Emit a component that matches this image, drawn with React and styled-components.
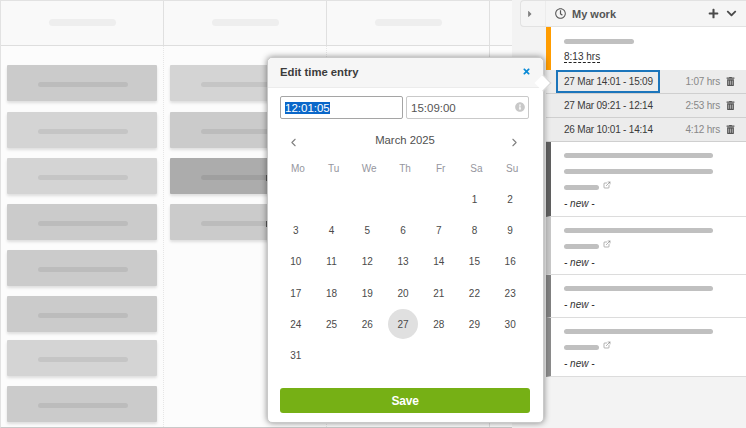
import { useEffect, useRef } from "react";
import styled, { createGlobalStyle } from "styled-components";
import { FaRegClock, FaPlus, FaChevronDown, FaTimes, FaInfoCircle, FaTrashAlt, FaCaretRight } from "react-icons/fa";
import { ChevronLeft, ChevronRight, ExternalLink } from "lucide-react";

const GlobalStyle = createGlobalStyle`
    html, body {
        margin: 0;
        padding: 0;
        background: #fff;
        font-family: "Liberation Sans", Arial, sans-serif;
    }
    * {
        box-sizing: border-box;
    }
    ::selection {
        background: #0a67c9;
        color: #fff;
    }
`;

const Page = styled.div`
    position: relative;
    width: 746px;
    height: 428px;
    display: flex;
    overflow: hidden;
`;

/* board on the left */
const Board = styled.div`
    width: 512px;
    height: 428px;
    display: flex;
    flex-direction: column;
    background: #fcfcfc;
    border: 1px solid #e2e2e2;
    border-right: none;
    border-bottom-color: #c9c9c9;
`;

const BoardHead = styled.div`
    height: 45px;
    flex-shrink: 0;
    display: grid;
    grid-template-columns: 163px 163px 163px 22px;
    background: #f9f9f9;
    border-bottom: 1px solid #dedede;
`;

const HeadCell = styled.div`
    display: flex;
    align-items: center;
    justify-content: center;
    border-right: 1px solid #e0e0e0;

    &:last-child {
        border-right: none;
    }
`;

const HeadBar = styled.span`
    width: 67px;
    height: 7px;
    margin-top: -1px;
    border-radius: 4px;
    background: #eeeeee;
`;

const BoardBody = styled.div`
    flex: 1;
    display: grid;
    grid-template-columns: 163px 163px 163px 22px;
`;

const Lane = styled.div`
    display: flex;
    flex-direction: column;
    padding: 19px 0 0 6px;
    border-right: 1px ${(p) => (p.$solid ? "solid #e0e0e0" : "dotted #e6e6e6")};

    &:last-child {
        border-right: none;
    }
`;

const Card = styled.div`
    position: relative;
    width: 150px;
    height: 36px;
    flex-shrink: 0;
    margin-bottom: ${(p) => p.$gap}px;
    display: flex;
    align-items: center;
    justify-content: center;
    padding: 2px 0 0 2px;
    background: ${(p) => p.$tone};
    border-radius: 1px;
    box-shadow: 0 2px 3px rgba(0, 0, 0, 0.12);
`;

const CardBar = styled.span`
    width: 90px;
    height: 5px;
    border-radius: 3px;
    background: rgba(0, 0, 0, 0.07);
`;

const CardBadge = styled.span`
    position: absolute;
    top: 17px;
    left: 96px;
    width: 6px;
    height: 6px;
    background: #555;
`;

/* my work panel */
const Panel = styled.div`
    flex: 1;
    display: flex;
    flex-direction: column;
    padding-left: 8px;
    background: #f3f3f3;
`;

const PanelHead = styled.div`
    height: 27px;
    flex-shrink: 0;
    display: flex;
    align-items: center;
    background: #f5f5f5;
    border: 1px solid #e2e2e2;
    border-right: none;
    border-radius: 4px 0 0 4px;
    color: #555;
`;

const Toggle = styled.div`
    width: 25px;
    height: 100%;
    display: flex;
    align-items: center;
    padding-left: 4px;
    border-right: 1px solid #ececec;
    color: #808080;
    font-size: 10px;
`;

const PanelTitle = styled.div`
    flex: 1;
    display: flex;
    align-items: center;
    gap: 6px;
    padding-left: 9px;
    font-size: 11px;
    font-weight: bold;
    color: #555;
`;

const HeadActions = styled.div`
    display: flex;
    align-items: center;
    gap: 7px;
    padding-right: 9px;
    font-size: 11px;
    color: #4a4a4a;
`;

const WorkList = styled.div`
    margin-left: 26px;
    display: flex;
    flex-direction: column;
`;

const Summary = styled.div`
    height: 43px;
    padding: 6px 0 0 13px;
    background: #fff;
    border-left: 5px solid #ff9c00;
`;

const Line = styled.div`
    height: 16px;
    display: flex;
    align-items: center;
    gap: 4px;
`;

const Bar = styled.span`
    width: ${(p) => p.$w}px;
    height: 5px;
    border-radius: 3px;
    background: #c0c0c0;
`;

const Total = styled.span`
    font-size: 10px;
    line-height: 11px;
    color: #333;
    border-bottom: 1px dashed #222;
`;

const TimeRow = styled.div`
    height: 24px;
    display: flex;
    align-items: stretch;
    background: #ececec;
    border-bottom: 1px solid #cfcfcf;
    font-size: 10px;
    letter-spacing: -0.2px;
`;

const TimeRange = styled.div`
    width: 104px;
    margin-left: 10px;
    display: flex;
    align-items: center;
    padding-left: 6px;
    color: #3a3a3a;
    white-space: nowrap;
    border: 2px solid ${(p) => (p.$active ? "#1b75bb" : "transparent")};
`;

const Hours = styled.div`
    flex: 1;
    display: flex;
    align-items: center;
    justify-content: flex-end;
    color: #888;
`;

const TrashBtn = styled.div`
    width: 26px;
    display: flex;
    align-items: center;
    padding-left: 6px;
    color: #555;
    font-size: 9px;
`;

const WorkItem = styled.div`
    padding: 5px 0 ${(p) => p.$bottom}px 13px;
    background: #fff;
    border-left: 5px solid ${(p) => p.$strip};
    border-bottom: 1px solid #dcdcdc;
`;

const LinkIcon = styled.span`
    display: flex;
    margin-top: -4px;
    color: #666;
`;

const NewLabel = styled.div`
    height: 16px;
    display: flex;
    align-items: center;
    font-size: 10px;
    font-style: italic;
    color: #333;
`;

/* time entry popover, it lies over the board */
const Popover = styled.div`
    position: absolute;
    top: 57px;
    left: 267px;
    width: 277px;
    background: #fff;
    border: 1px solid #c9c9c9;
    border-radius: 5px;
    box-shadow: 0 0 6px rgba(0, 0, 0, 0.45);
`;

const Arrow = styled.span`
    position: absolute;
    top: 19px;
    right: -6px;
    width: 12px;
    height: 12px;
    background: #fff;
    border-top: 1px solid #d4d4d4;
    border-right: 1px solid #d4d4d4;
    transform: rotate(45deg);
`;

const PopHead = styled.div`
    height: 30px;
    display: flex;
    align-items: center;
    justify-content: space-between;
    padding: 0 12px 2px 12px;
    background: #f6f6f6;
    border-bottom: 1px solid #ececec;
    border-radius: 5px 5px 0 0;
    font-size: 11.3px;
    font-weight: bold;
    color: #3c3c3c;
`;

const CloseBtn = styled.span`
    display: flex;
    color: #0a8ad6;
    font-size: 9px;
`;

const PopBody = styled.div`
    padding: 8px 13px 9px 12px;
`;

const TimeInputs = styled.div`
    display: flex;
    gap: 3px;
`;

const InputWrap = styled.div`
    position: relative;
    width: 123px;
    height: 23px;
`;

const TimeInput = styled.input`
    width: 100%;
    height: 100%;
    padding: 0 4px;
    border: 1px solid ${(p) => (p.$focused ? "#a5a5a5" : "#c9c9c9")};
    border-radius: 2px;
    outline: none;
    background: #fff;
    font-family: "Liberation Sans", Arial, sans-serif;
    font-size: 11.5px;
    color: #555;
`;

const InfoMark = styled.span`
    position: absolute;
    top: 6px;
    right: 4px;
    display: flex;
    color: #c8c8c8;
    font-size: 10px;
`;

const MonthRow = styled.div`
    height: 20px;
    margin-top: 11px;
    display: flex;
    align-items: center;
    justify-content: space-between;
    padding: 0 9px 0 7px;
    font-size: 11.3px;
    color: #505050;
`;

const MonthLabel = styled.span`
    padding-left: 2px;
`;

const NavBtn = styled.span`
    display: flex;
    margin-top: 4px;
    color: #808080;
`;

const WeekGrid = styled.div`
    height: 31px;
    margin-top: 3px;
    display: grid;
    grid-template-columns: repeat(7, 1fr);
    align-items: center;
    justify-items: center;
`;

const WeekDay = styled.span`
    font-size: 10px;
    color: #96969e;
`;

const DayGrid = styled.div`
    margin-left: -2px;
    margin-right: 2px;
    display: grid;
    grid-template-columns: repeat(7, 1fr);
    grid-auto-rows: 31.2px;
    align-items: center;
    justify-items: center;
`;

const Day = styled.span`
    width: 30px;
    height: 30px;
    display: flex;
    align-items: center;
    justify-content: center;
    border-radius: 50%;
    font-size: 10px;
    color: #4a4a4a;
    background: ${(p) => (p.$selected ? "#e0e0e0" : "transparent")};

    &:first-child {
        grid-column-start: 6;
    }
`;

const SaveBtn = styled.button`
    display: block;
    width: 250px;
    height: 25px;
    margin-top: 17px;
    border: none;
    border-radius: 3px;
    background: #76b015;
    color: #fff;
    font-family: "Liberation Sans", Arial, sans-serif;
    font-size: 12px;
    font-weight: bold;
    letter-spacing: -0.2px;
`;

const laneOne = [
    { tone: "#cbcbcb", gap: 11 },
    { tone: "#d4d4d4", gap: 10 },
    { tone: "#d4d4d4", gap: 10 },
    { tone: "#cbcbcb", gap: 10 },
    { tone: "#cbcbcb", gap: 10 },
    { tone: "#cbcbcb", gap: 8 },
    { tone: "#d4d4d4", gap: 10 },
    { tone: "#cbcbcb", gap: 0 },
];

const laneTwo = [
    { tone: "#d4d4d4", gap: 11 },
    { tone: "#cbcbcb", gap: 10 },
    { tone: "#acacac", gap: 10, badge: true },
    { tone: "#cbcbcb", gap: 0, badge: true },
];

const entries = [
    { range: "27 Mar 14:01 - 15:09", hours: "1:07 hrs", active: true },
    { range: "27 Mar 09:21 - 12:14", hours: "2:53 hrs" },
    { range: "26 Mar 10:01 - 14:14", hours: "4:12 hrs" },
];

const tasks = [
    { strip: "#606060", bars: 2, link: true, bottom: 5 },
    { strip: "#c8c8c8", bars: 1, link: true, bottom: 4 },
    { strip: "#808080", bars: 1, link: false, bottom: 5 },
    { strip: "#8c8c8c", bars: 1, link: true, bottom: 5 },
];

const weekDays = ["Mo", "Tu", "We", "Th", "Fr", "Sa", "Su"];
const days = Array.from({ length: 31 }, (_, i) => i + 1);

const Lanes = ({ cards }) => (
    <Lane>
        {cards.map((card, i) => (
            <Card key={i} $tone={card.tone} $gap={card.gap}>
                <CardBar />
                {card.badge && <CardBadge />}
            </Card>
        ))}
    </Lane>
);

const App = () => {
    const startRef = useRef(null);

    useEffect(() => {
        startRef.current.focus();
        startRef.current.select();
    }, []);

    return (
        <Page>
            <GlobalStyle />
            <Board>
                <BoardHead>
                    <HeadCell><HeadBar /></HeadCell>
                    <HeadCell><HeadBar /></HeadCell>
                    <HeadCell><HeadBar /></HeadCell>
                    <HeadCell />
                </BoardHead>
                <BoardBody>
                    <Lanes cards={laneOne} />
                    <Lanes cards={laneTwo} />
                    <Lane $solid />
                    <Lane />
                </BoardBody>
            </Board>

            <Panel>
                <PanelHead>
                    <Toggle><FaCaretRight /></Toggle>
                    <PanelTitle><FaRegClock />My work</PanelTitle>
                    <HeadActions><FaPlus /><FaChevronDown /></HeadActions>
                </PanelHead>
                <WorkList>
                    <Summary>
                        <Line><Bar $w={70} /></Line>
                        <Line><Total>8:13 hrs</Total></Line>
                    </Summary>
                    {entries.map((entry) => (
                        <TimeRow key={entry.range}>
                            <TimeRange $active={entry.active}>{entry.range}</TimeRange>
                            <Hours>{entry.hours}</Hours>
                            <TrashBtn><FaTrashAlt /></TrashBtn>
                        </TimeRow>
                    ))}
                    {tasks.map((task, i) => (
                        <WorkItem key={i} $strip={task.strip} $bottom={task.bottom}>
                            {Array.from({ length: task.bars }, (_, b) => (
                                <Line key={b}><Bar $w={149} /></Line>
                            ))}
                            {task.link && (
                                <Line>
                                    <Bar $w={35} />
                                    <LinkIcon><ExternalLink size={8} strokeWidth={1.5} /></LinkIcon>
                                </Line>
                            )}
                            <NewLabel>- new -</NewLabel>
                        </WorkItem>
                    ))}
                </WorkList>
            </Panel>

            <Popover>
                <Arrow />
                <PopHead>
                    Edit time entry
                    <CloseBtn><FaTimes /></CloseBtn>
                </PopHead>
                <PopBody>
                    <TimeInputs>
                        <InputWrap>
                            <TimeInput ref={startRef} $focused defaultValue="12:01:05" />
                        </InputWrap>
                        <InputWrap>
                            <TimeInput defaultValue="15:09:00" />
                            <InfoMark><FaInfoCircle /></InfoMark>
                        </InputWrap>
                    </TimeInputs>
                    <MonthRow>
                        <NavBtn><ChevronLeft size={13} /></NavBtn>
                        <MonthLabel>March 2025</MonthLabel>
                        <NavBtn><ChevronRight size={13} /></NavBtn>
                    </MonthRow>
                    <WeekGrid>
                        {weekDays.map((name) => (
                            <WeekDay key={name}>{name}</WeekDay>
                        ))}
                    </WeekGrid>
                    <DayGrid>
                        {days.map((day) => (
                            <Day key={day} $selected={day === 27}>{day}</Day>
                        ))}
                    </DayGrid>
                    <SaveBtn>Save</SaveBtn>
                </PopBody>
            </Popover>
        </Page>
    );
};

export default App;
